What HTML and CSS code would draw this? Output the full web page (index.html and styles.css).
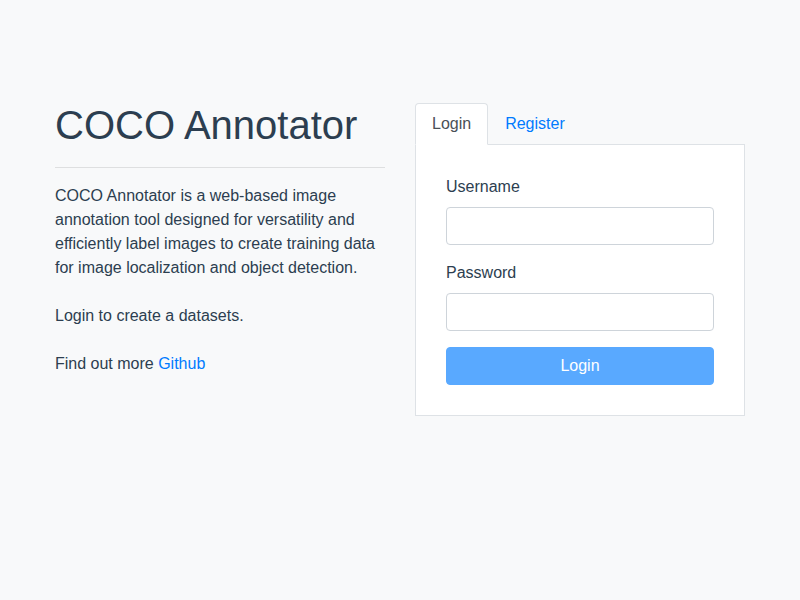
FILE: index.html
```html
<!DOCTYPE html>
<html lang="en">
<head>
<meta charset="utf-8">
<title>COCO Annotator</title>
<link rel="stylesheet" href="styles.css">
</head>
<body>
<div class="container">
  <div class="row">
    <div class="col intro">
      <h1 class="title">COCO Annotator</h1>
      <hr class="divider">
      <p class="lead-text">
        COCO Annotator is a web-based image annotation tool designed for versatility and efficiently label images to create training data for image localization and object detection.<br><br>
        Login to create a datasets.<br><br>
        Find out more <a class="link" href="#">Github</a>
      </p>
    </div>
    <div class="col auth">
      <ul class="tabs">
        <li class="tab active">Login</li>
        <li class="tab">Register</li>
      </ul>
      <div class="tab-content">
        <form class="form">
          <div class="form-group">
            <label class="label">Username</label>
            <input class="input" type="text">
          </div>
          <div class="form-group">
            <label class="label">Password</label>
            <input class="input" type="password">
          </div>
          <button class="btn" type="button" disabled>Login</button>
        </form>
      </div>
    </div>
  </div>
</div>
</body>
</html>
```
FILE: styles.css
```css
* { box-sizing: border-box; }
html, body { margin: 0; padding: 0; }
body {
  background: #f8f9fa;
  color: #2c3e50;
  font-family: "Liberation Sans", Helvetica, Arial, sans-serif;
  font-size: 16px;
  line-height: 1.5;
  height: 600px;
}
.container {
  width: 720px;
  margin: 0 auto;
  padding: 101px 15px 0;
}
.row {
  display: flex;
  margin: 0 -15px;
}
.col {
  flex: 0 0 50%;
  padding: 0 15px;
}
.title {
  margin: 0;
  font-size: 40px;
  font-weight: 400;
  line-height: 1.2;
}
.divider {
  margin: 18px 0 16px;
  border: 0;
  border-top: 1px solid rgba(0,0,0,.1);
}
.lead-text {
  margin: 0;
}
.link {
  color: #007bff;
  text-decoration: none;
}
.auth {
  padding-top: 2px;
}
.tabs {
  display: flex;
  list-style: none;
  margin: 0;
  padding: 0;
  border-bottom: 1px solid #dee2e6;
}
.tab {
  padding: 8px 16px;
  margin-bottom: -1px;
  border: 1px solid transparent;
  border-top-left-radius: 4px;
  border-top-right-radius: 4px;
  color: #007bff;
  line-height: 24px;
}
.tab.active {
  color: #495057;
  background: #fff;
  border-color: #dee2e6 #dee2e6 #fff;
}
.tab-content {
  background: #fff;
  border: 1px solid #dee2e6;
  border-top: 0;
  padding: 30px;
}
.form { margin: 0; }
.form-group {
  margin-bottom: 16px;
}
.label {
  display: block;
  margin-bottom: 8px;
  line-height: 24px;
}
.input {
  display: block;
  width: 100%;
  height: 38px;
  padding: 6px 12px;
  font: inherit;
  color: #495057;
  background: #fff;
  border: 1px solid #ced4da;
  border-radius: 4px;
}
.btn {
  display: block;
  width: 100%;
  height: 38px;
  padding: 6px 12px;
  font: inherit;
  line-height: 24px;
  color: #fff;
  background: #59a9ff;
  border: 1px solid #59a9ff;
  border-radius: 4px;
}
```
